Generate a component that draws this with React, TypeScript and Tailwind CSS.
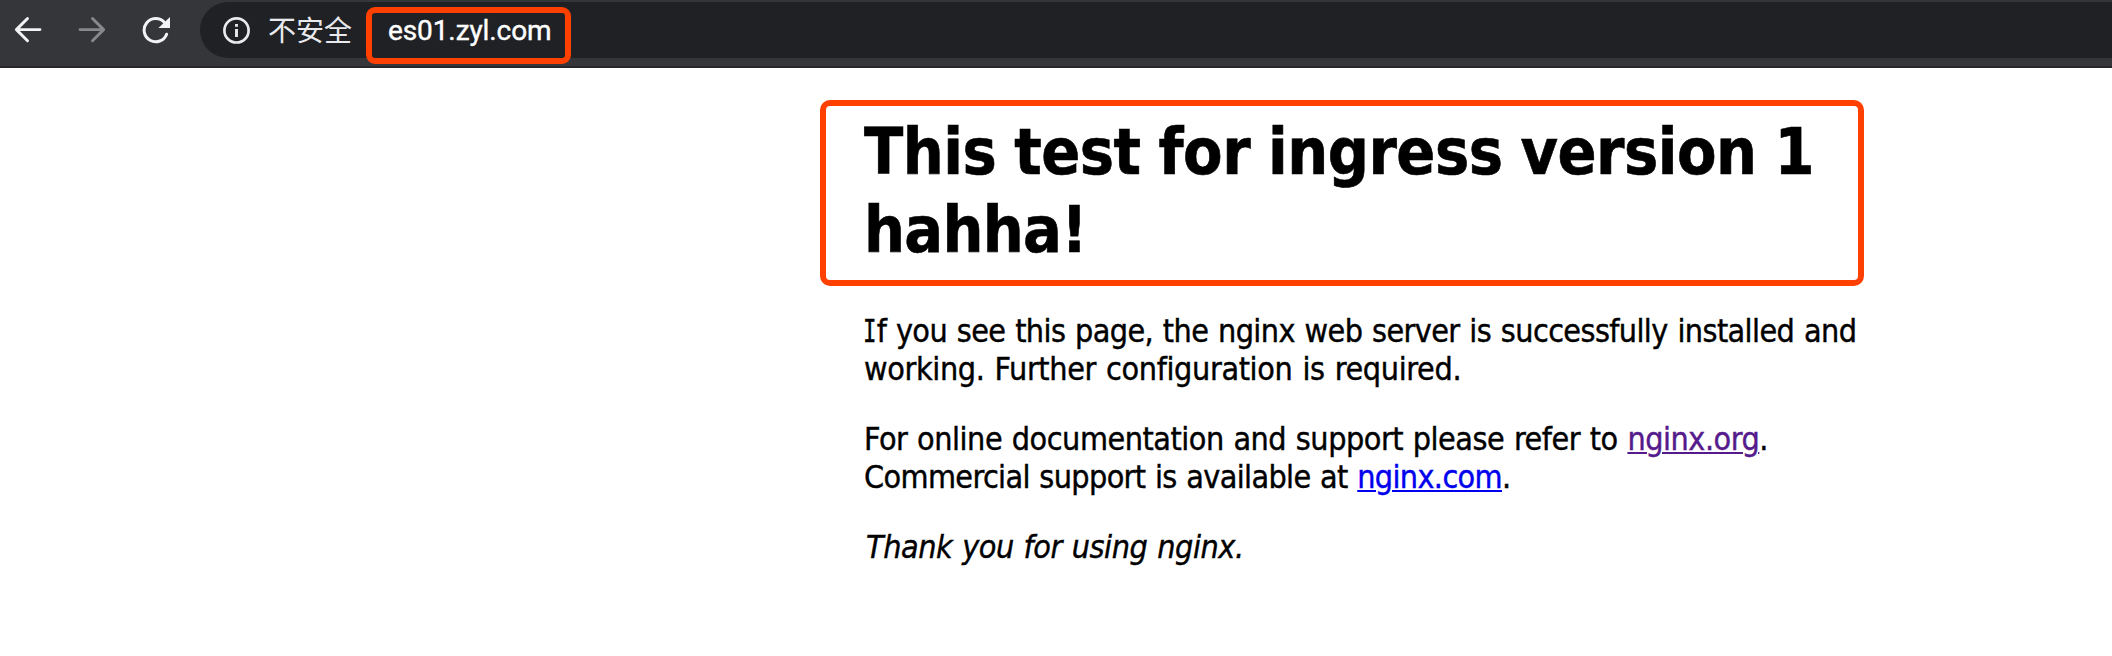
import type { ReactNode } from "react";

function BackIcon() {
  return (
    <svg width="28" height="28" viewBox="0 0 28 28" fill="none" stroke="currentColor" strokeWidth="2.9" strokeLinecap="round" strokeLinejoin="round">
      <path d="M13.5 2.5 2.4 13.6 13.5 24.7M2.6 13.6H26" />
    </svg>
  );
}

function ForwardIcon() {
  return (
    <svg width="28" height="28" viewBox="0 0 28 28" fill="none" stroke="currentColor" strokeWidth="2.9" strokeLinecap="round" strokeLinejoin="round">
      <path d="M14.5 2.5 25.6 13.6 14.5 24.7M25.4 13.6H2" />
    </svg>
  );
}

function ReloadIcon() {
  return (
    <svg width="28" height="28" viewBox="0 0 28 28" fill="none">
      <path d="M22.2 6.2A11.6 11.6 0 1 0 24.6 18.2" stroke="currentColor" strokeWidth="3" strokeLinecap="round" />
      <path d="M28 1V12H16.4Z" fill="currentColor" />
    </svg>
  );
}

function InfoIcon() {
  return (
    <svg width="28" height="28" viewBox="0 0 28 28" fill="none">
      <circle cx="14.5" cy="14.4" r="12.1" stroke="currentColor" strokeWidth="2.7" />
      <path d="M14.5 12.9V20.9M14.5 7.9V10.7" stroke="currentColor" strokeWidth="2.9" />
    </svg>
  );
}

function Toolbar() {
  return (
    <header className="flex h-[68px] items-start border-b-2 border-[#29262b] bg-[#35363a] pt-[2px] text-[#f1f3f4]">
      <div className="flex w-[200px] shrink-0 items-center pt-[14px] pl-[14px]">
        <BackIcon />
        <span className="ml-[36px] text-[#87888b]">
          <ForwardIcon />
        </span>
        <span className="ml-[36px]">
          <ReloadIcon />
        </span>
      </div>
      <div className="flex h-[56px] grow items-center rounded-l-full bg-[#202124] pl-[22px] text-[28px] leading-[56px]">
        <span className="text-[#e8eaed]">
          <InfoIcon />
        </span>
        <span className="ml-[18px] w-[120px] whitespace-nowrap pb-[2px] font-['Noto_Sans_CJK_SC',sans-serif] text-[#e8eaed]">不安全</span>
        <span className="whitespace-nowrap pt-[2px] font-['Roboto',sans-serif] tracking-[-0.1px] text-white [-webkit-text-stroke:0.4px]">es01.zyl.com</span>
      </div>
    </header>
  );
}

function Line({ className, children }: { className: string; children: ReactNode }) {
  return <span className={`block whitespace-pre ${className}`}>{children}</span>;
}

export default function App() {
  return (
    <div className="relative h-[656px] w-[2112px] overflow-hidden bg-white">
      <Toolbar />
      <main className="ml-[864px] w-[1120px] pt-[45px] font-['DejaVu_Sans_Condensed','DejaVu_Sans',sans-serif] text-[32px] leading-[38px] text-black">
        <h1 className="text-[64px] leading-[78px] font-bold [-webkit-text-stroke:0.6px]">
          <Line className="tracking-[-0.5px] [word-spacing:-1.6px]">This test for ingress version 1</Line>
          <Line className="tracking-[-0.7px]">hahha!</Line>
        </h1>
        <p className="mt-[43px] [-webkit-text-stroke:0.4px]">
          <Line className="tracking-[-0.6px] [word-spacing:1.2px]">
            <span className="mr-[-4.5px] ml-[-1.5px] inline-block origin-left scale-x-[0.7] font-['DejaVu_Sans_Mono']">I</span>
            f you see this page, the nginx web server is successfully installed and
          </Line>
          <Line className="tracking-[-0.35px] [word-spacing:1.2px]">working. Further configuration is required.</Line>
        </p>
        <p className="mt-[32px] [-webkit-text-stroke:0.4px]">
          <Line className="tracking-[-0.47px] [word-spacing:1px]">
            For online documentation and support please refer to{" "}
            <a className="text-[#551a8b] underline decoration-2 underline-offset-[2px]">nginx.org</a>.
          </Line>
          <Line className="tracking-[-0.63px] [word-spacing:1px]">
            Commercial support is available at{" "}
            <a className="text-[#0000ee] underline decoration-2 underline-offset-[2px]">nginx.com</a>.
          </Line>
        </p>
        <p className="mt-[32px] italic [-webkit-text-stroke:0.4px]">
          <Line className="pl-[2px] tracking-[-0.4px] [word-spacing:1px]">Thank you for using nginx.</Line>
        </p>
      </main>
      <div className="absolute top-[7px] left-[366px] h-[57px] w-[205px] rounded-[9px] border-[6px] border-[#ff4000]" />
      <div className="absolute top-[100px] left-[820px] h-[186px] w-[1044px] rounded-[10px] border-[6px] border-[#ff4000]" />
    </div>
  );
}
